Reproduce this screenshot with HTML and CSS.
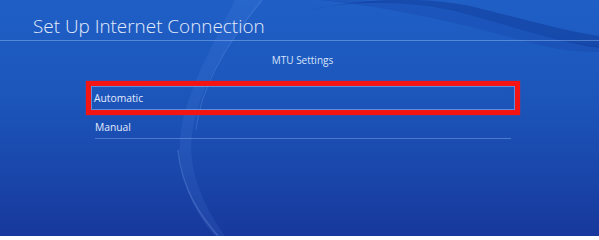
FILE: index.html
```html
<!DOCTYPE html>
<html>
<head>
<meta charset="utf-8">
<link rel="stylesheet" href="styles.css">
</head>
<body>
<div class="screen">
  <svg class="waves" width="599" height="236" viewBox="0 0 599 236" aria-hidden="true">
    <path d="M235 0 C 205 60, 170 120, 182 170 C 190 205, 205 225, 215 236 L 225 236 C 210 215, 196 190, 192 160 C 186 110, 220 50, 262 0 Z" fill="rgba(120,170,255,0.10)"/>
    <path d="M262 0 C 225 45, 200 90, 196 130" stroke="rgba(150,190,255,0.18)" stroke-width="1.2" fill="none"/>
    <path d="M178 150 C 182 190, 200 215, 218 236" stroke="rgba(150,190,255,0.22)" stroke-width="1.5" fill="none"/>
    <path d="M300 12 C 360 -2, 420 0, 480 18 C 530 32, 570 44, 599 48 L 599 36 C 560 30, 520 18, 470 6 C 420 -4, 360 -2, 300 12 Z" fill="rgba(10,40,130,0.35)"/>
    <path d="M320 0 C 380 6, 450 20, 520 40 C 555 50, 580 52, 599 52 L 599 46 C 570 44, 530 32, 480 18 C 430 4, 380 0, 330 0 Z" fill="rgba(20,60,160,0.25)"/>
  </svg>
  <header class="header">
    <h1 class="title">Set Up Internet Connection</h1>
  </header>
  <div class="subtitle">MTU Settings</div>
  <ul class="menu">
    <li class="item selected"><span>Automatic</span></li>
    <li class="item"><span>Manual</span></li>
  </ul>
</div>
</body>
</html>
```
FILE: styles.css
```css
html, body {
  margin: 0;
  padding: 0;
}
body {
  width: 599px;
  height: 236px;
  overflow: hidden;
  font-family: "Open Sans", "Noto Sans", sans-serif;
}
.screen {
  position: relative;
  width: 599px;
  height: 236px;
  background: linear-gradient(180deg, #1f5fc6 0%, #1c56bb 40%, #1a48ac 70%, #17389c 100%);
  color: #dfe9fb;
  overflow: hidden;
}
.waves {
  position: absolute;
  left: 0;
  top: 0;
}
.header {
  position: relative;
  height: 41px;
  box-sizing: border-box;
  border-bottom: 1px solid rgba(150, 190, 250, 0.45);
  padding-left: 33px;
}
.title {
  margin: 0;
  padding-top: 14px;
  font-size: 18.9px;
  line-height: 24px;
  font-weight: 300;
  color: #e4ecfb;
}
.subtitle {
  position: relative;
  text-align: center;
  padding-left: 6px;
  margin-top: 11px;
  font-size: 10px;
  line-height: 16px;
  color: #d8e4fa;
}
.menu {
  position: relative;
  list-style: none;
  margin: 13px 0 0 86px;
  padding: 0;
  width: 434px;
}
.item {
  font-size: 10.3px;
  color: #e2eafb;
}
.item.selected {
  height: 34px;
  box-sizing: border-box;
  border: 5px solid #f51414;
  box-shadow: inset 0 0 0 1px rgba(150, 190, 250, 0.55), 0 0 1px rgba(255, 40, 40, 0.8);
  display: flex;
  align-items: center;
  padding-left: 3px;
}
.item:not(.selected) {
  margin: 0 9px 0 9px;
  height: 24px;
  box-sizing: border-box;
  border-bottom: 1px solid rgba(150, 190, 250, 0.4);
  display: flex;
  align-items: center;
  padding-left: 0;
}
```
